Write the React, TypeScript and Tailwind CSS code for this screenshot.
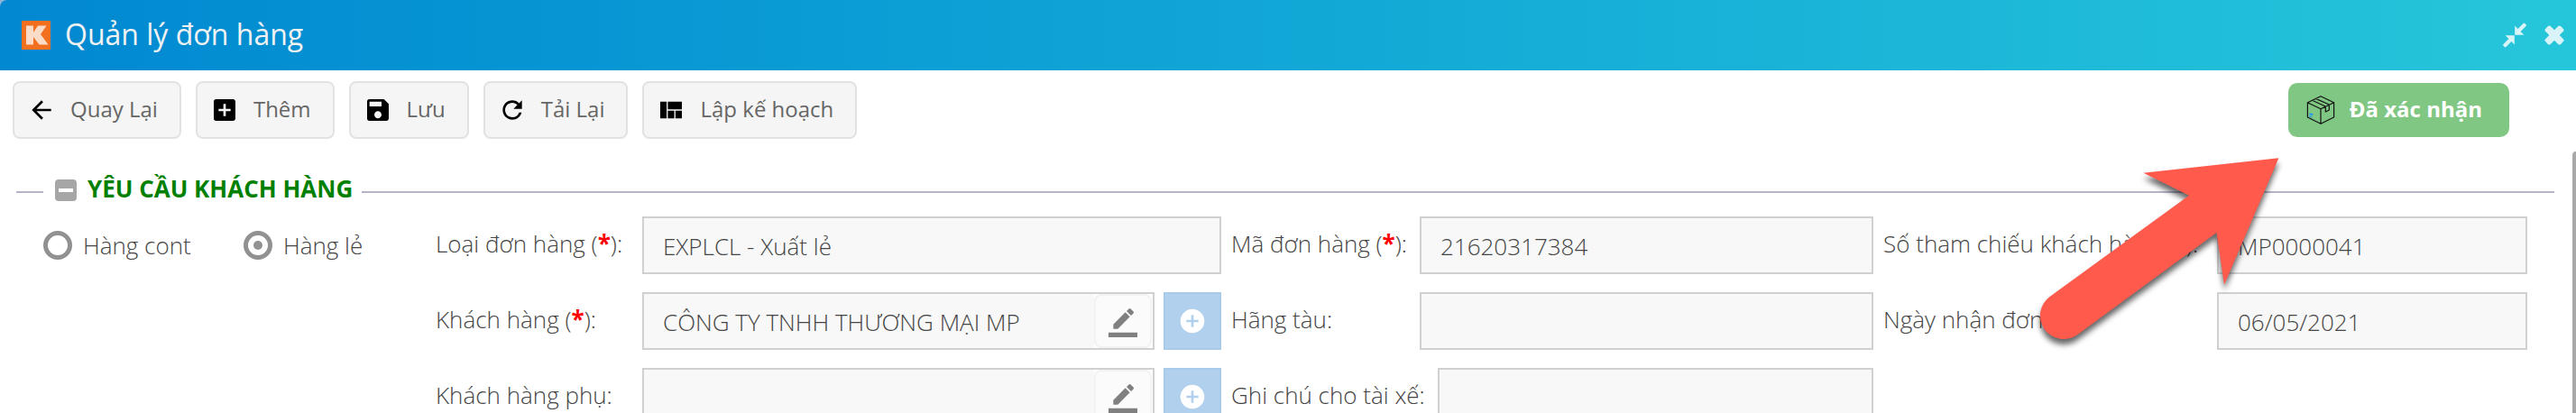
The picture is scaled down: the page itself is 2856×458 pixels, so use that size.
import { useState, type ReactNode } from "react";
import { MdAddBox, MdArrowBack, MdSave, MdRefresh, MdViewQuilt, MdAddCircle } from "react-icons/md";

function ToolButton({ icon, children }: { icon: ReactNode; children: ReactNode }) {
  return (
    <button
      type="button"
      className="flex h-16 items-center gap-4 rounded-lg border-2 border-[#e2e2e2] bg-[#f5f5f5] pr-6 pl-[14px] text-2xl text-[#666]"
    >
      <span className="text-[32px] text-black">{icon}</span>
      <span className="pb-0.5">{children}</span>
    </button>
  );
}

function EditIcon() {
  return (
    <svg viewBox="0 0 24 24" className="mt-1 h-8 w-8" fill="currentColor">
      <path d="M17.750 7L14 3.250l-10 10V17h3.750l10-10zm2.960-2.960c.39-.39.39-1.020 0-1.410L18.370.29c-.39-.39-1.020-.39-1.410 0L15 2.250 18.750 6l1.960-1.960zM0 20h24v4H0z" />
    </svg>
  );
}

function Field({
  id,
  label,
  required,
  value = "",
  labelClass,
  lookup,
}: {
  id: string;
  label: string;
  required?: boolean;
  value?: string;
  labelClass: string;
  lookup?: boolean;
}) {
  return (
    <div className="flex h-16">
      <label htmlFor={id} className={`shrink-0 pt-3 leading-9 whitespace-nowrap ${labelClass}`}>
        {label}
        {required && (
          <>
            {" "}(<b className="font-bold text-[#f00]">*</b>)
          </>
        )}
        :
      </label>
      <div className="flex min-w-0 flex-1 border-2 border-[#d0d0d0] bg-[#f8f8f8]">
        <input
          id={id}
          defaultValue={value}
          readOnly
          className="min-w-0 flex-1 bg-transparent px-[21px] pt-0.5 font-light text-[#444] outline-none"
        />
        {lookup && (
          <div className="bg-white pr-px">
            <button
              type="button"
              aria-label={`${label}: sửa`}
              className="flex h-[60px] w-16 items-center justify-center rounded-lg border-2 border-[#f2f2f2] bg-[#fbfbfb] text-[#808080]"
            >
              <EditIcon />
            </button>
          </div>
        )}
      </div>
      {lookup && (
        <button
          type="button"
          aria-label={`${label}: thêm`}
          className="ml-[10px] flex w-16 items-center justify-center border-2 border-[#a9cbeb] bg-[#b1d0ee] text-[32px] text-white"
        >
          <MdAddCircle />
        </button>
      )}
    </div>
  );
}

function Radio({ label, value, current, onPick }: { label: string; value: string; current: string; onPick: (v: string) => void }) {
  return (
    <label className="flex h-16 items-center gap-3">
      <input
        type="radio"
        name="cargo"
        checked={current === value}
        onChange={() => onPick(value)}
        className="grid h-8 w-8 appearance-none place-items-center rounded-full border-[5px] border-[#919191] before:h-[10px] before:w-[10px] before:rounded-full checked:before:bg-[#919191]"
      />
      {label}
    </label>
  );
}

export default function App() {
  const [cargo, setCargo] = useState("lcl");
  return (
    <div className="relative h-screen overflow-hidden bg-white font-['Open_Sans',sans-serif]">
      <div className="bg-[#8fb4d6]">
        <header className="flex h-[78px] items-center rounded-tl-lg bg-linear-to-r from-[#0288d1] to-[#26c6da] pr-[13px] pl-6 text-[#f2f2f2]">
          <svg viewBox="0 0 32 32" className="h-8 w-8">
            <rect width="32" height="32" fill="#f37021" />
            <path d="M5 5.500h8v7.500l5-7.500h9.500l-6.500 9.500 8.500 11.500h-10L13 18v8.500H5z" fill="#fbdcc8" />
          </svg>
          <h1 className="ml-4 pb-0.5 text-[32px] font-normal">Quản lý đơn hàng</h1>
          <div className="ml-auto flex items-center gap-[19px]">
            <button type="button" aria-label="Thu nhỏ">
              <svg viewBox="0 0 28 28" className="h-7 w-7" fill="#d9f4f8">
                <path d="M14.200 13.800V3.500l3.400 3.400L23.500 1q1-.8 1.800 0l1.200 1.200q.8 1 0 1.800l-6 5.900 3.900 3.900zM13.800 14.200v10.300l-3.400-3.400L4.500 27q-1 .8-1.800 0l-1.200-1.200q-.8-1 0-1.800l6-5.900-3.900-3.900z" />
              </svg>
            </button>
            <button type="button" aria-label="Đóng">
              <svg viewBox="0 0 22 22" className="h-[22px] w-[22px]" fill="#d9f4f8">
                <rect x="-1" y="7" width="24" height="8" rx="2" transform="rotate(45 11 11)" />
                <rect x="-1" y="7" width="24" height="8" rx="2" transform="rotate(-45 11 11)" />
              </svg>
            </button>
          </div>
        </header>
      </div>

      <nav className="flex items-center gap-4 pt-3 pr-[74px] pl-[14px]">
        <ToolButton icon={<MdArrowBack />}>Quay Lại</ToolButton>
        <ToolButton icon={<MdAddBox />}>Thêm</ToolButton>
        <ToolButton icon={<MdSave />}>Lưu</ToolButton>
        <ToolButton icon={<MdRefresh />}>Tải Lại</ToolButton>
        <ToolButton icon={<MdViewQuilt />}>Lập kế hoạch</ToolButton>
        <button
          type="button"
          className="ml-auto flex h-[60px] items-center gap-4 rounded-[10px] bg-[#81c784] pr-[30px] pl-5 text-2xl font-bold text-white"
        >
          <svg viewBox="0 0 32 32" className="h-8 w-8" fill="none" stroke="#111" strokeWidth="1.200" strokeLinejoin="round">
            <path d="M16 .7L30.600 7.700V24L16 31.300 1.400 24V7.700zM1.400 7.700L16 14.700l14.600-7M16 14.700v16.600M10.500 3.400L25.300 10M6.500 5.300L21.300 12M21.300 12v6l4-2v-6" />
            <path d="M3 20l4 2M3 22.500l3 1.500M4 20l3 .5" stroke="#2196f3" />
          </svg>
          <span className="pb-0.5">Đã xác nhận</span>
        </button>
      </nav>

      <main className="pt-[39px]">
        <div className="flex h-9 items-center pr-6 pl-[18px]">
          <span className="mt-1 h-0.5 w-[30px] bg-[#b5b5c8]" />
          <button type="button" aria-label="Thu gọn" className="mr-3 ml-[13px] flex h-6 w-6 items-center justify-center rounded bg-[#a6a6a6]">
            <span className="h-1 w-4 bg-white" />
          </button>
          <h2 className="pb-1 text-[26px] leading-9 font-bold text-[#008000]">YÊU CẦU KHÁCH HÀNG</h2>
          <span className="mt-1 ml-[10px] h-0.5 flex-1 bg-[#b5b5c8]" />
        </div>

        <form className="grid grid-cols-[424px_minmax(0,871fr)_minmax(0,712fr)_minmax(0,714fr)] gap-x-[11px] pt-[11px] pr-[54px] pl-12 text-[26px] font-light text-[#444]">
          <fieldset className="grid grid-cols-[222px_1fr] self-start">
            <Radio label="Hàng cont" value="fcl" current={cargo} onPick={setCargo} />
            <Radio label="Hàng lẻ" value="lcl" current={cargo} onPick={setCargo} />
          </fieldset>
          <div className="flex flex-col gap-5">
            <Field id="type" label="Loại đơn hàng" required value="EXPLCL - Xuất lẻ" labelClass="w-[229px]" />
            <Field id="customer" label="Khách hàng" required value="CÔNG TY TNHH THƯƠNG MẠI MP" labelClass="w-[229px]" lookup />
            <Field id="sub" label="Khách hàng phụ" labelClass="w-[229px]" lookup />
          </div>
          <div className="flex flex-col gap-5">
            <Field id="code" label="Mã đơn hàng" required value="21620317384" labelClass="w-[209px]" />
            <Field id="line" label="Hãng tàu" labelClass="w-[209px]" />
            <Field id="note" label="Ghi chú cho tài xế" labelClass="w-[229px]" />
          </div>
          <div className="flex flex-col gap-5">
            <Field id="ref" label="Số tham chiếu khách hàng" required value="MP0000041" labelClass="w-[370px]" />
            <Field id="date" label="Ngày nhận đơn" value="06/05/2021" labelClass="w-[370px]" />
          </div>
        </form>
      </main>

      <div className="absolute top-[168px] right-0 bottom-0 w-1 rounded-tl bg-[#a8a8a8]" />
      <svg
        viewBox="0 0 290 230"
        className="pointer-events-none absolute top-[165px] right-[316px] h-[230px] w-[290px] drop-shadow-[0_6px_3px_rgba(0,0,0,0.6)]"
        fill="#ff5a4b"
      >
        <path d="M276.400 10.300L126.400 26.700 177 51.700 22.600 164A26 26 0 0 0 53.400 206L207.500 93 216 150.700z" />
      </svg>
    </div>
  );
}
